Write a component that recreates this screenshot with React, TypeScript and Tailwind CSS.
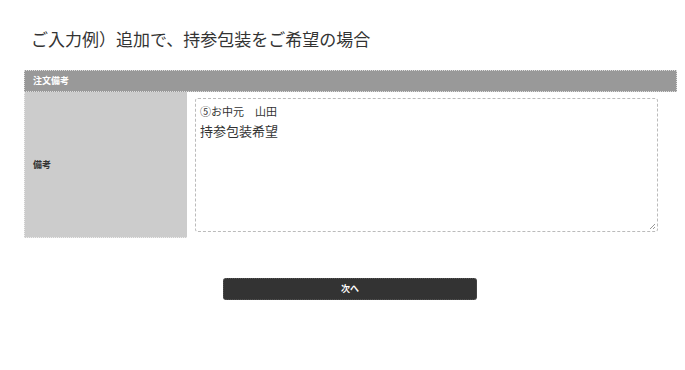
import React from "react";

const jp = "font-['Noto_Sans_CJK_JP','Noto_Sans',sans-serif]";

const App: React.FC = () => {
	return (
		<div className={`w-[685px] h-[370px] bg-white ${jp}`}>
			{/* Heading */}
			<h1 className="pl-[31px] pt-[27px] text-[17px] leading-[24px] text-[#333] font-normal">
				ご入力例）追加で、持参包装をご希望の場合
			</h1>

			{/* Notes table */}
			<div className="ml-[24px] mt-[19px] w-[653px]">
				<div className="h-[22px] bg-[#999] border border-dotted border-[#ddd] flex items-center pl-[8px]">
					<span className="text-[9px] font-bold text-white">注文備考</span>
				</div>
				<div className="flex">
					<div className="w-[163px] h-[146px] bg-[#ccc] border-l border-b border-dotted border-[#eee] flex items-center pl-[8px]">
						<span className="text-[9px] font-bold text-[#333]">備考</span>
					</div>
					<div className="pl-[8px] pt-[6px]">
						<div className="relative w-[463px] h-[134px] border border-dashed border-[#bbb] rounded-[3px] px-[4px] pt-[4px] text-[#333]">
							<div className="text-[11px] leading-[16px]">⑤お中元　山田</div>
							<div className="text-[13px] leading-[20px] mt-[2px]">持参包装希望</div>
							<svg
								className="absolute right-[1px] bottom-[1px]"
								width="7"
								height="7"
								viewBox="0 0 7 7"
							>
								<path d="M6 1 L1 6 M6 4 L4 6" stroke="#999" strokeWidth="1" />
							</svg>
						</div>
					</div>
				</div>
			</div>

			{/* Next button */}
			<div className="flex mt-[40px] pl-[223px]">
				<button className="w-[254px] h-[22px] bg-[#333] rounded-[3px] border border-dotted border-[#555] text-white text-[9px] font-bold flex items-center justify-center">
					次へ
				</button>
			</div>
		</div>
	);
};

export default App;
